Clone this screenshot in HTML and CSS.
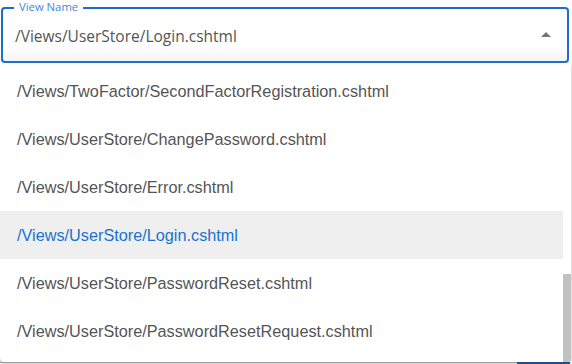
FILE: index.html
```html
<!DOCTYPE html>
<html lang="en">
  <head>
    <meta charset="UTF-8" />
    <meta name="viewport" content="width=device-width, initial-scale=1.0" />
    <title>View Name</title>
    <link rel="stylesheet" href="styles.css">
  </head>
  <body>
    <div class="field">
      <span class="field-label">View Name</span>
      <div class="field-value">/Views/UserStore/Login.cshtml</div>
      <svg class="field-arrow" width="10" height="5" viewBox="0 0 10 5">
        <path d="M0 5 L5 0 L10 5 Z" fill="#757575" />
      </svg>
    </div>
    <div class="menu">
      <ul class="menu-list">
        <li class="menu-item">/Views/TwoFactor/SecondFactorRegistration.cshtml</li>
        <li class="menu-item">/Views/UserStore/ChangePassword.cshtml</li>
        <li class="menu-item">/Views/UserStore/Error.cshtml</li>
        <li class="menu-item selected">/Views/UserStore/Login.cshtml</li>
        <li class="menu-item">/Views/UserStore/PasswordReset.cshtml</li>
        <li class="menu-item">/Views/UserStore/PasswordResetRequest.cshtml</li>
      </ul>
      <div class="scroll-track">
        <div class="scroll-thumb"></div>
      </div>
    </div>
    <div class="page-below">
      <div class="below-line"></div>
      <div class="below-button"></div>
    </div>
  </body>
</html>
```

FILE: styles.css
```css
* {
  margin: 0;
  padding: 0;
  box-sizing: border-box;
}

body {
  background-color: #ffffff;
  width: 572px;
  height: 364px;
  overflow: hidden;
  font-family: "Liberation Sans", Arial, sans-serif;
}

.field {
  position: relative;
  margin: 7px 3px 0 1px;
  height: 56px;
  border: 2px solid #1a6fcc;
  border-radius: 4px;
  display: flex;
  align-items: center;
  padding: 0 16px 0 12px;
  background: linear-gradient(to bottom, #ffffff 70%, #f4f4f4 100%);
}

.field-label {
  position: absolute;
  top: -9px;
  left: 11px;
  padding: 0 5px;
  background-color: #ffffff;
  color: #3d8ad8;
  font-family: "Open Sans", "Noto Sans", sans-serif;
  font-size: 11.3px;
  line-height: 14px;
}

.field-value {
  flex: 1;
  font-family: "Open Sans", "Noto Sans", sans-serif;
  font-size: 15.5px;
  color: #555555;
  padding-top: 1px;
}

.field-arrow {
  display: block;
  margin-top: -2px;
}

.menu {
  display: flex;
  height: 299px;
  margin-right: 1px;
  background-color: #ffffff;
  border-radius: 0 0 4px 4px;
  box-shadow: 0 0 1px rgba(0, 0, 0, 0.35), 0 2px 3px rgba(0, 0, 0, 0.25);
  overflow: hidden;
}

.menu-list {
  flex: 1;
  list-style: none;
  padding-top: 4px;
}

.menu-item {
  height: 48px;
  display: flex;
  align-items: center;
  padding-left: 17px;
  font-size: 16.25px;
  color: #555555;
}

.menu-item.selected {
  background-color: #efefef;
  color: #1a73d0;
}

.scroll-track {
  width: 8px;
  display: flex;
  flex-direction: column;
  justify-content: flex-end;
}

.scroll-thumb {
  height: 88px;
  background-color: #c1c1c1;
}

.page-below {
  display: flex;
  height: 2px;
}

.below-line {
  flex: 1;
  border-top: 1px solid #9e9e9e;
}

.below-button {
  width: 53px;
  margin-right: 2px;
  background-color: #1d4f8a;
}
```
